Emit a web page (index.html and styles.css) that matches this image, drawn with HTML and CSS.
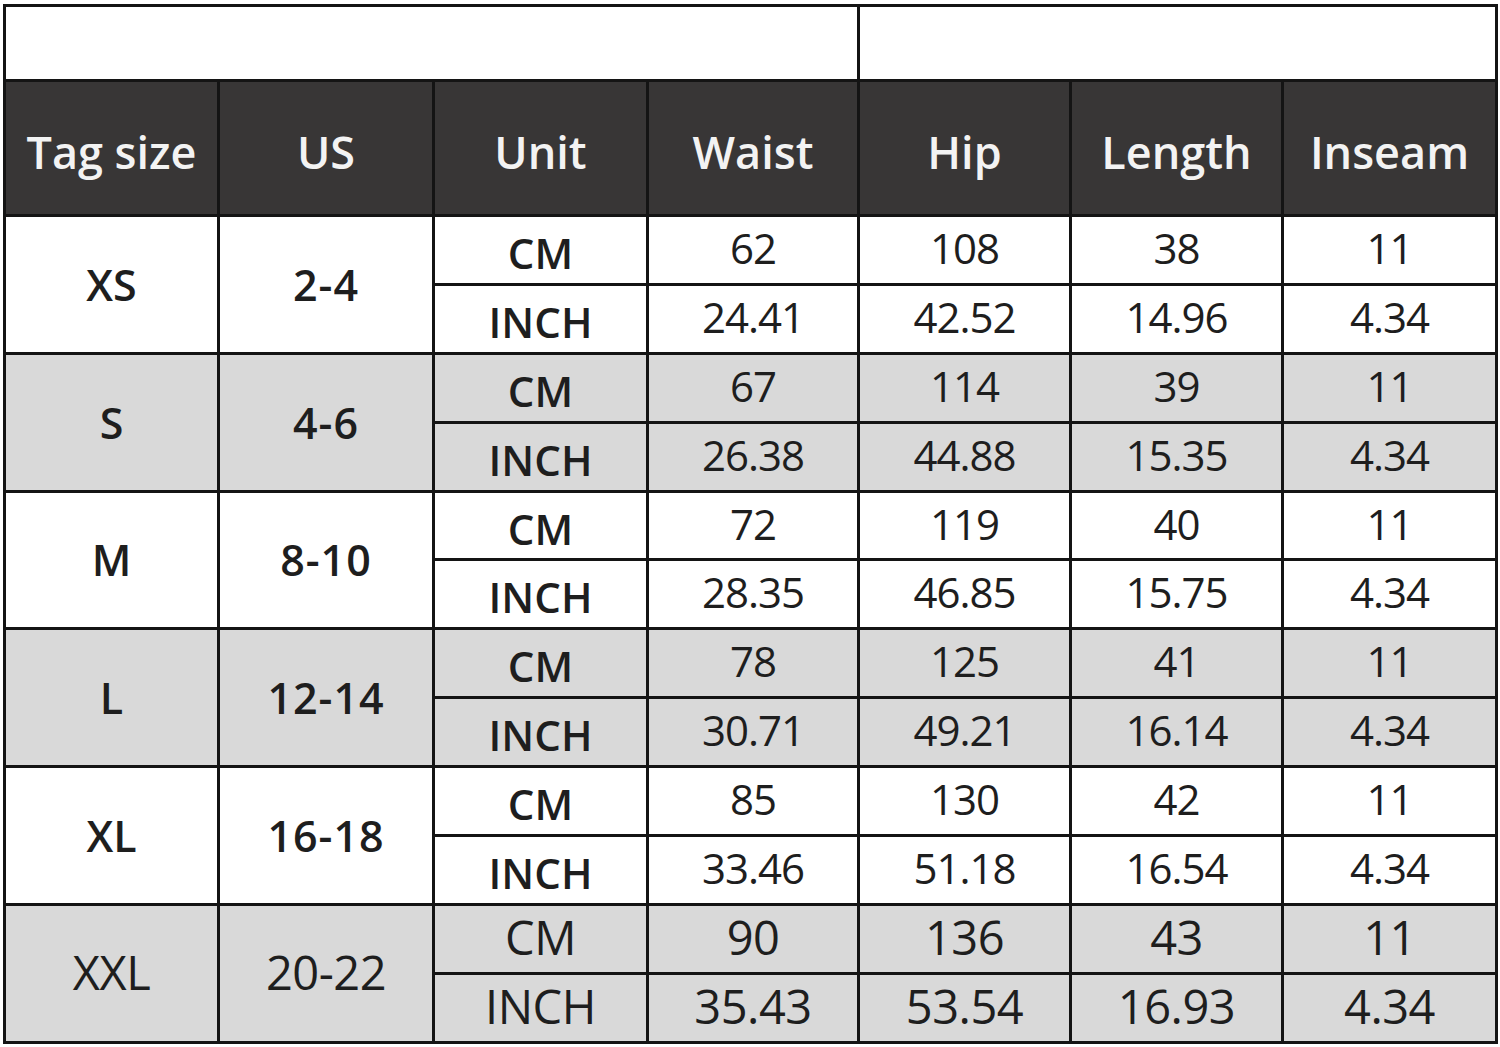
FILE: index.html
```html
<!DOCTYPE html>
<html lang="en">
<head>
<meta charset="utf-8">
<title>Size chart</title>
<link rel="stylesheet" href="styles.css">
</head>
<body>
<table class="chart">
  <colgroup>
    <col class="c1"><col class="c2"><col class="c3"><col class="c4"><col class="c5"><col class="c6"><col class="c7">
  </colgroup>
  <tr class="title-row">
    <td colspan="4"></td>
    <td colspan="3"></td>
  </tr>
  <tr class="head-row">
    <th>Tag size</th><th>US</th><th>Unit</th><th>Waist</th><th>Hip</th><th>Length</th><th>Inseam</th>
  </tr>

  <tr class="sub white">
    <td rowspan="2" class="size">XS</td><td rowspan="2" class="us">2-4</td>
    <td class="unit">CM</td><td class="num">62</td><td class="num">108</td><td class="num">38</td><td class="num">11</td>
  </tr>
  <tr class="sub white">
    <td class="unit">INCH</td><td class="num">24.41</td><td class="num">42.52</td><td class="num">14.96</td><td class="num">4.34</td>
  </tr>

  <tr class="sub gray">
    <td rowspan="2" class="size">S</td><td rowspan="2" class="us">4-6</td>
    <td class="unit">CM</td><td class="num">67</td><td class="num">114</td><td class="num">39</td><td class="num">11</td>
  </tr>
  <tr class="sub gray">
    <td class="unit">INCH</td><td class="num">26.38</td><td class="num">44.88</td><td class="num">15.35</td><td class="num">4.34</td>
  </tr>

  <tr class="sub white">
    <td rowspan="2" class="size">M</td><td rowspan="2" class="us">8-10</td>
    <td class="unit">CM</td><td class="num">72</td><td class="num">119</td><td class="num">40</td><td class="num">11</td>
  </tr>
  <tr class="sub white">
    <td class="unit">INCH</td><td class="num">28.35</td><td class="num">46.85</td><td class="num">15.75</td><td class="num">4.34</td>
  </tr>

  <tr class="sub gray">
    <td rowspan="2" class="size">L</td><td rowspan="2" class="us">12-14</td>
    <td class="unit">CM</td><td class="num">78</td><td class="num">125</td><td class="num">41</td><td class="num">11</td>
  </tr>
  <tr class="sub gray">
    <td class="unit">INCH</td><td class="num">30.71</td><td class="num">49.21</td><td class="num">16.14</td><td class="num">4.34</td>
  </tr>

  <tr class="sub white">
    <td rowspan="2" class="size">XL</td><td rowspan="2" class="us">16-18</td>
    <td class="unit">CM</td><td class="num">85</td><td class="num">130</td><td class="num">42</td><td class="num">11</td>
  </tr>
  <tr class="sub white">
    <td class="unit">INCH</td><td class="num">33.46</td><td class="num">51.18</td><td class="num">16.54</td><td class="num">4.34</td>
  </tr>

  <tr class="sub gray last">
    <td rowspan="2" class="size">XXL</td><td rowspan="2" class="us">20-22</td>
    <td class="unit">CM</td><td class="num">90</td><td class="num">136</td><td class="num">43</td><td class="num">11</td>
  </tr>
  <tr class="sub gray last">
    <td class="unit">INCH</td><td class="num">35.43</td><td class="num">53.54</td><td class="num">16.93</td><td class="num">4.34</td>
  </tr>
</table>
</body>
</html>
```
FILE: styles.css
```css
html, body {
  margin: 0;
  padding: 0;
  background: #ffffff;
}

body {
  padding: 4px 0 0 3px;
  font-family: "Open Sans", "Noto Sans", sans-serif;
  color: #1e1e1e;
}

.chart {
  table-layout: fixed;
  width: 1495px;
  border-collapse: separate;
  border-spacing: 0;
  border-top: 3px solid #141414;
  border-left: 3px solid #141414;
}

.c1 { width: 214px; }
.c2 { width: 215px; }
.c3 { width: 214px; }
.c4 { width: 211px; }
.c5 { width: 212px; }
.c6 { width: 212px; }
.c7 { width: 214px; }

.chart td,
.chart th {
  box-sizing: border-box;
  border-right: 3px solid #141414;
  border-bottom: 3px solid #141414;
  padding: 0;
  text-align: center;
  vertical-align: middle;
  line-height: 1;
}

.title-row td {
  height: 75px;
  background: #ffffff;
}

.head-row th {
  height: 135px;
  background: #383636;
  color: #f3f3f3;
  font-size: 45px;
  font-weight: 600;
  padding-top: 6px;
}

.sub td {
  height: 68.9px;
}

.white td { background: #ffffff; }
.gray td { background: #d9d9d9; }

.size,
.us {
  font-size: 43px;
  font-weight: 600;
}

.us {
  letter-spacing: 1px;
}

.unit {
  font-size: 42px;
  font-weight: 600;
  padding-top: 6px !important;
}

.num {
  font-size: 42px;
  font-weight: 400;
  letter-spacing: -1px;
  padding-bottom: 4px !important;
}

.last .size,
.last .us,
.last .unit,
.last .num {
  font-size: 47px;
  font-weight: 400;
  letter-spacing: -0.5px;
  padding-top: 0 !important;
  padding-bottom: 2px !important;
}
```
